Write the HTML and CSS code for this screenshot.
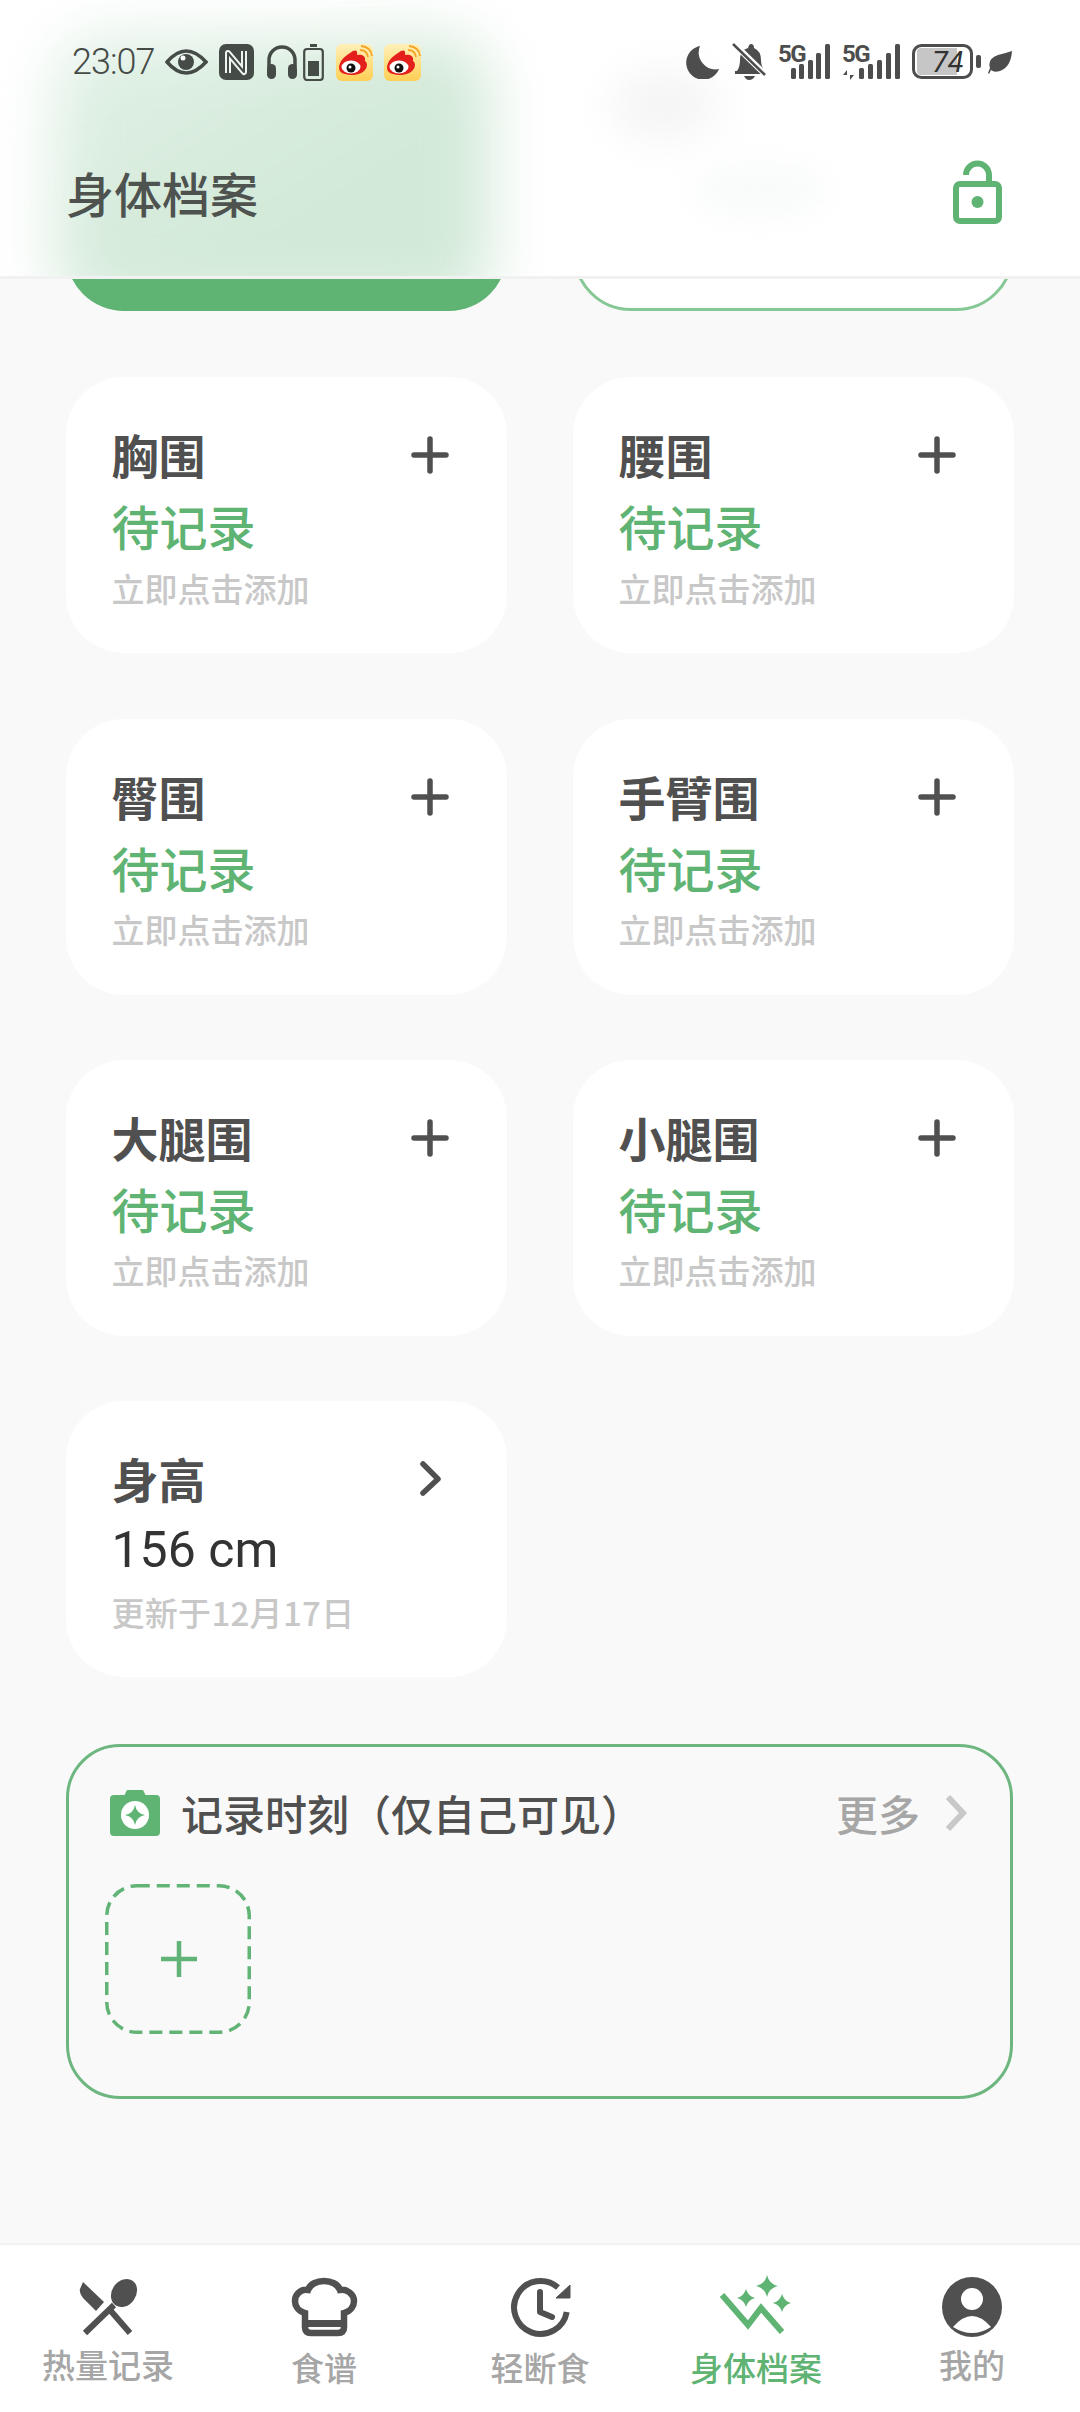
FILE: index.html
```html
<!DOCTYPE html>
<html>

<head>
  <title>身体档案</title>
  <link rel="stylesheet" href="styles.css">
</head>

<body>
  <div class="screen">
    <header class="top">
      <div class="frost frost_green"></div>
      <div class="frost frost_grey"></div>
      <div class="frost frost_pale"></div>

      <div class="status">
        <div class="status_side status_left">
          <span class="clock">23:07</span>
          <svg class="ic_eye" width="43" height="26" viewBox="0 0 43 26">
            <path d="M2 13 Q21 -9 41 13 Q21 35 2 13Z" fill="none" stroke="#454b47" stroke-width="3.5" />
            <circle cx="21" cy="13" r="8" fill="#454b47" />
            <circle cx="18" cy="9" r="2.5" fill="#fff" />
          </svg>
          <svg width="35" height="36" viewBox="0 0 35 36">
            <rect width="35" height="36" rx="7" fill="#454b47" />
            <path d="M9 29 V9 L25 28 V7" fill="none" stroke="#eef6f0" stroke-width="6" stroke-linejoin="round" />
            <path d="M9 29 V9 L25 28 V7" fill="none" stroke="#454b47" stroke-width="2" stroke-linejoin="round" />
          </svg>
          <svg width="32" height="34" viewBox="0 0 32 34">
            <path d="M3 22 V15 A13 13 0 0 1 29 15 V22" fill="none" stroke="#454b47" stroke-width="3.5" />
            <rect x="1" y="19" width="9" height="15" rx="4.5" fill="#454b47" />
            <rect x="22" y="19" width="9" height="15" rx="4.5" fill="#454b47" />
          </svg>
          <svg class="ic_tight" width="21" height="37" viewBox="0 0 21 37">
            <rect x="7" y="0" width="7" height="3" fill="#454b47" />
            <rect x="1.2" y="5" width="18.6" height="31" rx="3" fill="none" stroke="#454b47" stroke-width="2.2" />
            <rect x="5" y="17" width="11" height="15" fill="#454b47" />
          </svg>
          <svg width="37" height="37" viewBox="0 0 37 37">
            <use href="#weibo" />
          </svg>
          <svg width="37" height="37" viewBox="0 0 37 37">
            <use href="#weibo" />
          </svg>
        </div>

        <div class="status_side">
          <svg width="34" height="34" viewBox="0 0 34 34">
            <path d="M14 1 A17 17 0 1 0 33 24 A17 17 0 0 1 14 1Z" fill="#4d4d4d" />
          </svg>
          <svg width="35" height="38" viewBox="0 0 35 38">
            <path d="M5 28 Q8 24 8 17 Q8 7 16 5 Q17 1 19 1 Q22 1 22 5 Q29 8 29 17 Q29 24 33 28 V31 H3 V28Z" fill="#4d4d4d" />
            <path d="M12 33 H23 Q21 37 17 37 Q14 37 12 33Z" fill="#4d4d4d" />
            <path d="M2 1 L34 32" stroke="#fff" stroke-width="6" />
            <path d="M1 1 L33 32" stroke="#4d4d4d" stroke-width="2.5" />
          </svg>
          <svg class="ic_signal" width="53" height="44" viewBox="0 -4 53 44">
            <text class="net" x="0" y="18">5G</text>
            <rect x="13" y="24" width="5" height="11" rx="1.5" fill="#4d4d4d" />
            <rect x="21" y="20" width="5" height="15" rx="1.5" fill="#4d4d4d" />
            <rect x="30" y="16" width="5" height="19" rx="1.5" fill="#4d4d4d" />
            <rect x="47" y="0" width="5" height="35" rx="1.5" fill="#4d4d4d" />
            <rect x="38" y="9" width="5" height="26" rx="1.5" fill="#4d4d4d" />
          </svg>
          <svg class="ic_signal" width="58" height="44" viewBox="0 -4 58 44">
            <text class="net" x="0" y="18">5G</text>
            <path d="M5 26 L1 31 H5 V36 Z M8 25 V31 H12 L8 36Z" fill="#4d4d4d" />
            <rect x="17" y="24" width="5" height="11" rx="1.5" fill="#4d4d4d" />
            <rect x="26" y="20" width="5" height="15" rx="1.5" fill="#4d4d4d" />
            <rect x="35" y="16" width="5" height="19" rx="1.5" fill="#4d4d4d" />
            <rect x="44" y="9" width="5" height="26" rx="1.5" fill="#4d4d4d" />
            <rect x="53" y="0" width="5" height="35" rx="1.5" fill="#4d4d4d" />
          </svg>
          <svg class="ic_batt" width="70" height="36" viewBox="0 0 70 36">
            <rect x="1.5" y="1.5" width="58" height="32" rx="8" fill="#fff" stroke="#4d4d4d" stroke-width="3" />
            <path d="M5 8 Q5 4 9 4 H45 V31 H9 Q5 31 5 27Z" fill="#c6c6c6" />
            <rect x="64" y="11" width="5" height="13" rx="2" fill="#4d4d4d" />
            <text class="batt_num" x="20" y="28">74</text>
          </svg>
          <svg class="ic_tight" width="24" height="24" viewBox="0 0 24 24">
            <path d="M24 1 Q23 17 12 21 Q6 23 3 20 L1 24 L0 23 L2 18 Q-1 9 10 5 Q18 3 24 1Z" fill="#4d4d4d" />
          </svg>
        </div>
      </div>

      <div class="titlebar">
        <h1>身体档案</h1>
        <svg width="50" height="64" viewBox="0 0 50 64">
          <path d="M13 15 A11.5 11.5 0 0 1 36 15 V24" fill="none" stroke="#5fb373" stroke-width="6" />
          <rect x="3" y="24" width="43" height="37" rx="4" fill="#fff" stroke="#5fb373" stroke-width="6" />
          <circle cx="24.500" cy="42" r="6" fill="#5fb373" />
        </svg>
      </div>
    </header>

    <main class="content">
      <div class="cards">
        <div class="card card_cut card_solid"></div>
        <div class="card card_cut card_line"></div>

        <div class="card">
          <div class="card_head">
            <span class="card_title">胸围</span>
            <svg class="card_icon" viewBox="0 0 38 38"><use href="#plus" /></svg>
          </div>
          <div class="card_value">待记录</div>
          <div class="card_hint">立即点击添加</div>
        </div>
        <div class="card">
          <div class="card_head">
            <span class="card_title">腰围</span>
            <svg class="card_icon" viewBox="0 0 38 38"><use href="#plus" /></svg>
          </div>
          <div class="card_value">待记录</div>
          <div class="card_hint">立即点击添加</div>
        </div>
        <div class="card">
          <div class="card_head">
            <span class="card_title">臀围</span>
            <svg class="card_icon" viewBox="0 0 38 38"><use href="#plus" /></svg>
          </div>
          <div class="card_value">待记录</div>
          <div class="card_hint">立即点击添加</div>
        </div>
        <div class="card">
          <div class="card_head">
            <span class="card_title">手臂围</span>
            <svg class="card_icon" viewBox="0 0 38 38"><use href="#plus" /></svg>
          </div>
          <div class="card_value">待记录</div>
          <div class="card_hint">立即点击添加</div>
        </div>
        <div class="card">
          <div class="card_head">
            <span class="card_title">大腿围</span>
            <svg class="card_icon" viewBox="0 0 38 38"><use href="#plus" /></svg>
          </div>
          <div class="card_value">待记录</div>
          <div class="card_hint">立即点击添加</div>
        </div>
        <div class="card">
          <div class="card_head">
            <span class="card_title">小腿围</span>
            <svg class="card_icon" viewBox="0 0 38 38"><use href="#plus" /></svg>
          </div>
          <div class="card_value">待记录</div>
          <div class="card_hint">立即点击添加</div>
        </div>
        <div class="card">
          <div class="card_head">
            <span class="card_title">身高</span>
            <svg class="card_icon" viewBox="0 0 38 38">
              <path d="M11 4 L26 19 L11 33" fill="none" stroke="#505050" stroke-width="5.500" stroke-linecap="round" stroke-linejoin="round" transform="translate(1 0)" />
            </svg>
          </div>
          <div class="card_value card_value_num">156 cm</div>
          <div class="card_hint card_hint_num">更新于12月17日</div>
        </div>
      </div>

      <section class="moments">
        <div class="moments_head">
          <svg width="50" height="46" viewBox="0 0 50 46">
            <path d="M14 6 L17 0 H33 L36 6Z" fill="#5fb373" />
            <rect y="5" width="50" height="41" rx="4" fill="#5fb373" />
            <circle cx="25" cy="25" r="14" fill="#fff" />
            <path d="M25 15 Q26.500 23.500 35 25 Q26.500 26.500 25 35 Q23.500 26.500 15 25 Q23.500 23.500 25 15Z" fill="#5fb373" />
          </svg>
          <span class="moments_title">记录时刻（仅自己可见）</span>
          <span class="moments_more">更多</span>
          <svg width="24" height="38" viewBox="0 0 24 38">
            <path d="M4 3 L19 19 L4 35" fill="none" stroke="#c8c8c8" stroke-width="6" />
          </svg>
        </div>
        <svg class="moments_add" width="146" height="150" viewBox="0 0 146 150">
          <rect x="1.750" y="1.750" width="142.500" height="146.500" rx="30" fill="none" stroke="#62b376" stroke-width="3.500" stroke-dasharray="13 7" />
          <path d="M74 57 V93 M56 75 H92" fill="none" stroke="#62b376" stroke-width="4.500" />
        </svg>
      </section>
    </main>

    <nav class="tabs">
      <div class="tab">
        <svg viewBox="0 -1 80 64">
          <path d="M15 6 L36 26 L28 35 L15 22 Q11 17 12 13Z" fill="#505050" />
          <path d="M42 34 L62 57 M46 29 L17 57" stroke="#505050" stroke-width="6" />
          <ellipse cx="56" cy="17" rx="12" ry="15" transform="rotate(35 56 17)" fill="#505050" />
        </svg>
        <span class="tab_label">热量记录</span>
      </div>
      <div class="tab tab_low">
        <svg viewBox="0 -1 80 64">
          <path d="M21 37 C14 35 11 30 11 25 C11 18 17 13 24 14 C26 8 33 5 40 5 C47 5 54 8 56 14 C63 13 70 18 70 25 C70 30 67 35 60 37 V51 Q60 57 54 57 H27 Q21 57 21 51Z" fill="none" stroke="#505050" stroke-width="6.500" />
          <path d="M21 47.500 H60" stroke="#505050" stroke-width="7" />
        </svg>
        <span class="tab_label">食谱</span>
      </div>
      <div class="tab tab_low">
        <svg viewBox="0 -1 80 64">
          <path d="M66.700 36 A26.500 26.500 0 1 1 58 11.500" fill="none" stroke="#505050" stroke-width="6" />
          <path d="M56 22 H70 V9Z" fill="#505050" stroke="#505050" stroke-width="1" />
          <path d="M40 16 V36 L52 41" fill="none" stroke="#505050" stroke-width="6" stroke-linecap="round" stroke-linejoin="round" />
        </svg>
        <span class="tab_label">轻断食</span>
      </div>
      <div class="tab tab_low tab_on">
        <svg viewBox="0 3 80 64">
          <path d="M6 23 L32 53 L45 36 L66 60" fill="none" stroke="#5fb373" stroke-width="6" />
          <path d="M51 3 Q53 12 62 14 Q53 16 51 25 Q49 16 40 14 Q49 12 51 3Z" fill="#5fb373" />
          <path d="M30 17 Q32 24 39 26 Q32 28 30 35 Q28 28 21 26 Q28 24 30 17Z" fill="#5fb373" />
          <path d="M66 22 Q68 29 75 31 Q68 33 66 40 Q64 33 57 31 Q64 29 66 22Z" fill="#5fb373" />
        </svg>
        <span class="tab_label">身体档案</span>
      </div>
      <div class="tab">
        <svg viewBox="0 0 80 64">
          <circle cx="40" cy="32" r="30" fill="#505050" />
          <circle cx="40" cy="24" r="11" fill="#fff" />
          <path d="M21 52 Q40 30 59 52 Q40 64 21 52Z" fill="#fff" />
        </svg>
        <span class="tab_label">我的</span>
      </div>
    </nav>
  </div>

  <svg class="defs" width="0" height="0">
    <defs>
      <linearGradient id="weibo_bg" x1="0" y1="0" x2="0" y2="1">
        <stop offset="0" stop-color="#fff0b8" />
        <stop offset="1" stop-color="#ffcf55" />
      </linearGradient>
      <symbol id="weibo" viewBox="0 0 37 37">
        <rect width="37" height="37" rx="6" fill="url(#weibo_bg)" />
        <path d="M3 24 C3 17 9 12 14 9 C19 5 22 6 21 11 C27 10 30 13 29 17 C33 19 32 30 17 31 C9 31 3 29 3 24Z" fill="#e3201b" />
        <ellipse cx="15" cy="23" rx="9.500" ry="6.500" fill="#fff" />
        <circle cx="15" cy="24" r="4.500" fill="#111" />
        <circle cx="14" cy="23" r="1.500" fill="#fff" />
        <path d="M24 6 Q31 6 32 13 M25 2 Q35 3 36 12" fill="none" stroke="#f4a52a" stroke-width="1.800" />
      </symbol>
      <symbol id="plus" viewBox="0 0 38 38">
        <path d="M19 3 V35 M3 19 H35" fill="none" stroke="#505050" stroke-width="5.500" stroke-linecap="round" />
      </symbol>
    </defs>
  </svg>
</body>

</html>
```

FILE: styles.css
```css
body {
  margin: 0;
  background: #f9f9f9;
  font-family: "Noto Sans CJK SC", "Noto Sans", sans-serif;
  color: #505050;
}

.screen {
  display: flex;
  flex-direction: column;
  height: 2412px;
  overflow: hidden;
}

.defs {
  position: absolute;
}

/* header with the frosted look of what scrolls under it */
.top {
  position: relative;
  z-index: 2;
  flex: none;
  height: 276px;
  overflow: hidden;
  background: #fff;
  border-bottom: 3px solid #f1f1f1;
}

.frost {
  position: absolute;
}

.frost_green {
  top: 36px;
  left: 54px;
  width: 436px;
  height: 274px;
  border-radius: 50px;
  background: linear-gradient(to bottom right, #e2f1e7, #d2e9d8 60%);
  filter: blur(30px);
}

.frost_grey {
  top: 70px;
  left: 610px;
  width: 110px;
  height: 70px;
  border-radius: 50%;
  background: #f5f5f5;
  filter: blur(20px);
}

.frost_pale {
  top: 165px;
  left: 690px;
  width: 140px;
  height: 50px;
  border-radius: 50%;
  background: #f7fbf8;
  filter: blur(18px);
}

.status {
  position: relative;
  display: flex;
  justify-content: space-between;
  align-items: center;
  height: 38px;
  padding: 43px 68px 0 72px;
}

.status_side {
  display: flex;
  align-items: center;
  gap: 12px;
}

.status_left {
  gap: 11.5px;
}

.ic_tight {
  margin-left: -6px;
}

.ic_signal {
  margin-left: -1px;
}

.clock {
  width: 81px;
  font-family: "Roboto", sans-serif;
  font-size: 36px;
  font-weight: 300;
  letter-spacing: -1px;
  color: #454b47;
}

.net {
  font-family: "Roboto", sans-serif;
  font-size: 24px;
  font-weight: 700;
  letter-spacing: -1.5px;
  fill: #4d4d4d;
}

.batt_num {
  font-family: "Roboto", sans-serif;
  font-size: 29px;
  font-style: italic;
  font-weight: 400;
  fill: #333;
}

.titlebar {
  position: relative;
  display: flex;
  justify-content: space-between;
  align-items: center;
  margin-top: 76px;
  height: 70px;
  padding: 0 77px 0 66px;
}

.titlebar h1 {
  margin: 0;
  font-size: 48px;
  font-weight: 500;
  color: #4e5350;
}

/* scrolled list */
.content {
  flex: 1;
  overflow: hidden;
}

.cards {
  display: grid;
  grid-template-columns: 441px 441px;
  column-gap: 66px;
  row-gap: 65.33px;
  margin-top: -243px;
  padding: 0 66px;
}

.card {
  box-sizing: border-box;
  height: 276px;
  padding: 47px 58px 0 45.500px;
  border-radius: 58px;
  background: #fff;
}

.card_cut {
  height: 275px;
  margin-bottom: 1px;
}

.card_solid {
  background: #5fb373;
}

.card_line {
  border: 3px solid #85c795;
}

.card_head {
  display: flex;
  justify-content: space-between;
  align-items: center;
  height: 60px;
}

.card_title {
  font-size: 47px;
  font-weight: 700;
  line-height: 60px;
}

.card_icon {
  width: 38px;
  height: 38px;
  margin-top: 2px;
}

.card_value {
  margin-top: 11px;
  font-size: 48px;
  font-weight: 500;
  line-height: 60px;
  color: #5fb373;
}

.card_value_num {
  margin-top: 12px;
  font-family: "Roboto", sans-serif;
  font-size: 50px;
  font-weight: 400;
  color: #333;
}

.card_hint {
  margin-top: 12.500px;
  font-size: 33px;
  font-weight: 500;
  line-height: 40px;
  color: #c8c8c8;
}

.card_hint_num {
  margin-top: 12px;
  letter-spacing: 0.3px;
}

/* moments box */
.moments {
  box-sizing: border-box;
  height: 355px;
  margin: 66.330px 67px 0 66px;
  padding: 41px 42px 0 35.500px;
  border: 3px solid #6db680;
  border-radius: 54px;
}

.moments_head {
  display: flex;
  align-items: center;
  height: 50px;
  padding-left: 5.500px;
}

.moments_title {
  margin-left: 21px;
  font-size: 42px;
  font-weight: 500;
  color: #505050;
}

.moments_more {
  margin-left: auto;
  font-size: 42px;
  font-weight: 500;
  color: #a6a6a6;
}

.moments_head svg:last-child {
  margin-left: 24px;
}

.moments_add {
  display: block;
  margin-top: 46px;
}

/* bottom nav */
.tabs {
  display: flex;
  flex: none;
  box-sizing: border-box;
  height: 169px;
  padding-top: 30px;
  background: #fff;
  border-top: 2px solid #f1f1f1;
}

.tab {
  display: flex;
  flex: 1;
  flex-direction: column;
  align-items: center;
}

.tab svg {
  width: 80px;
  height: 64px;
}

.tab_label {
  margin-top: 5px;
  font-size: 33px;
  font-weight: 500;
  line-height: 40px;
  color: #a6a6a6;
}

.tab_low .tab_label {
  margin-top: 8px;
}

.tab_on .tab_label {
  color: #5fb373;
}
```
